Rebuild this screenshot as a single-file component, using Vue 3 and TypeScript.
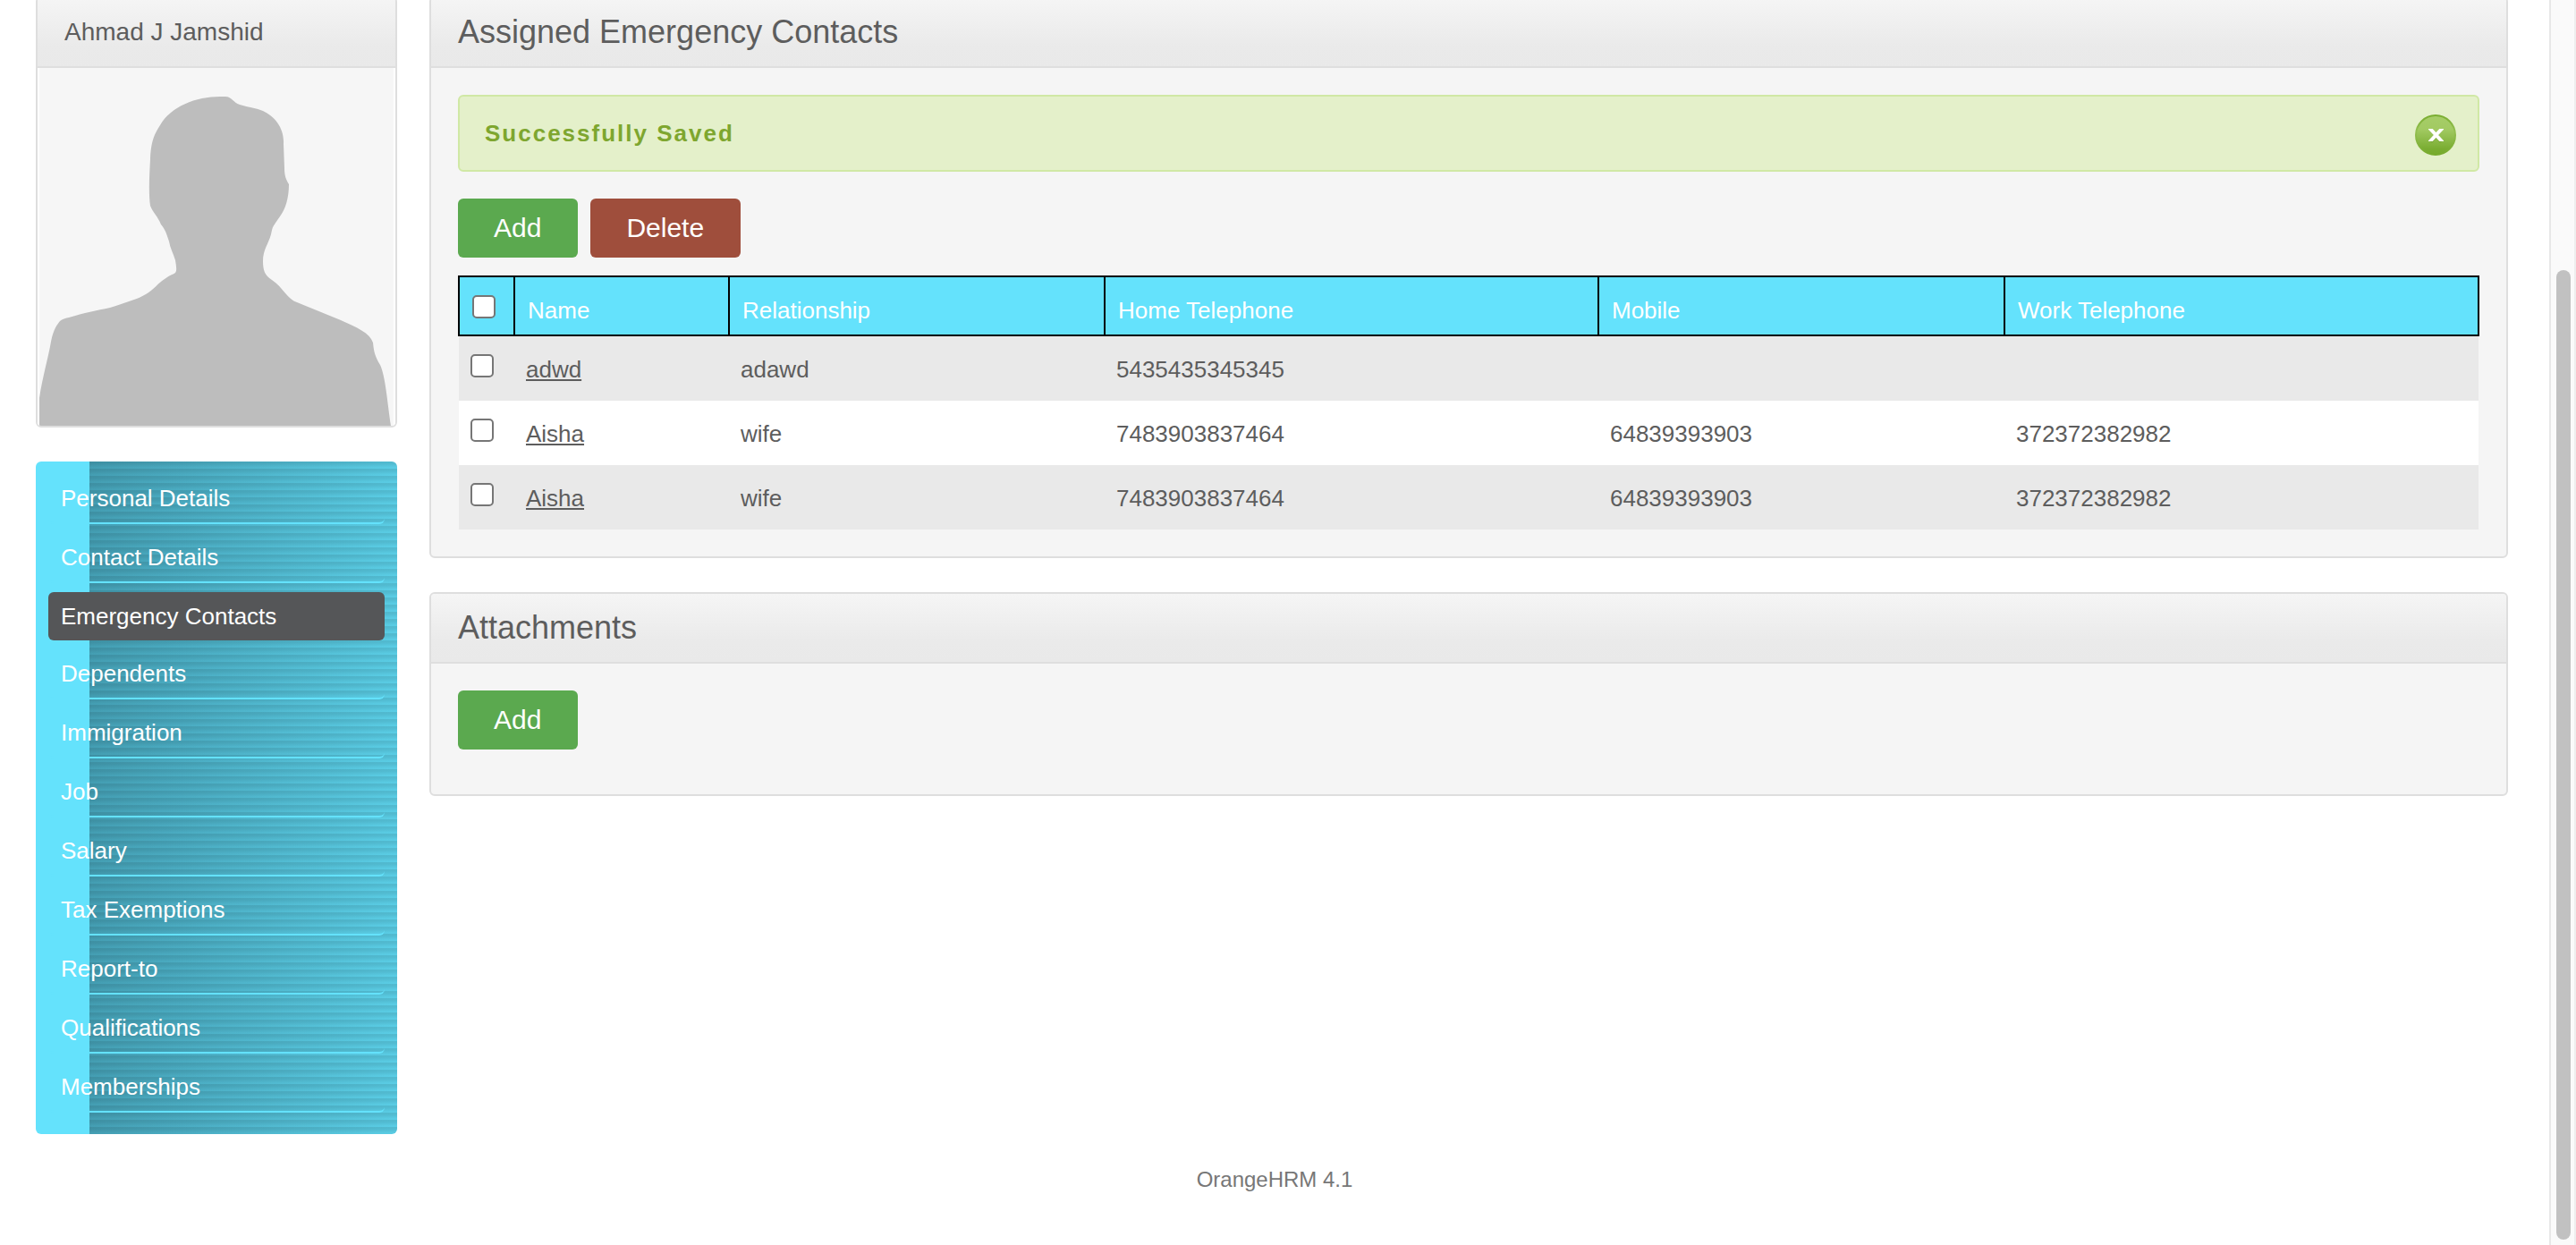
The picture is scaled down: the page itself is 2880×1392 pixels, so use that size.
<script setup lang="ts">
import { ref } from 'vue'

interface MenuItem {
  label: string
  selected?: boolean
}

interface Contact {
  id: number
  name: string
  relationship: string
  home: string
  mobile: string
  work: string
}

const menu: MenuItem[] = [
  { label: 'Personal Details' },
  { label: 'Contact Details' },
  { label: 'Emergency Contacts', selected: true },
  { label: 'Dependents' },
  { label: 'Immigration' },
  { label: 'Job' },
  { label: 'Salary' },
  { label: 'Tax Exemptions' },
  { label: 'Report-to' },
  { label: 'Qualifications' },
  { label: 'Memberships' },
]

const contacts: Contact[] = [
  { id: 1, name: 'adwd', relationship: 'adawd', home: '5435435345345', mobile: '', work: '' },
  { id: 2, name: 'Aisha', relationship: 'wife', home: '7483903837464', mobile: '64839393903', work: '372372382982' },
  { id: 3, name: 'Aisha', relationship: 'wife', home: '7483903837464', mobile: '64839393903', work: '372372382982' },
]

// Relative column widths: tick box, name, relationship, home, mobile, work
const columns = [62, 240, 420, 552, 454, 530]
const total = columns.reduce((sum, width) => sum + width, 0)
const share = (width: number) => `${(width / total) * 100}%`

const picked = ref<number[]>([])
const toggleAll = (event: Event) => {
  picked.value = (event.target as HTMLInputElement).checked ? contacts.map((c) => c.id) : []
}
</script>

<template>
  <div class="screen">
    <div class="page">
      <div class="columns">
        <aside class="sidebar">
          <section class="panel profile">
            <h1 class="panel-head profile-name">Ahmad J Jamshid</h1>
            <svg class="photo" viewBox="0 0 400 400" role="img" aria-label="Employee photo">
              <rect width="400" height="400" fill="#fff" />
              <rect x="2" width="396" height="400" fill="#f6f6f6" />
              <path
                fill="#bdbdbd"
                d="M2 400V369C6 343 12 324 15 306C18 291 22 287 25 283C27 281 30 280 35 279C52 274 66 271 81 268C90 265 97 263 105 260C111 258 116 256 121 253C130 248 135 240 142 236C147 232 151 231 154 229C156 226 155 222 154 215C152 208 148 201 147 194C144 185 143 181 138 175C134 165 129 162 126 154C124 140 125 120 126 102C127 80 131 74 137 64C149 43 177 32 204 32H210C217 32 218 38 226 41C236 44 245 45 252 48C265 54 276 67 275 85L276 112C276 121 278 125 281 130C281 146 277 158 271 166C262 179 263 177 261 186C258 197 252 203 252 216C252 226 254 232 262 237C274 245 280 259 290 262L339 282C357 290 371 296 375 307C376 317 377 322 383 332C389 345 391 373 395 400Z"
              />
            </svg>
          </section>

          <nav aria-label="Employee">
            <ul class="menu">
              <li v-for="item in menu" :key="item.label">
                <a href="#" class="menu-link" :class="{ selected: item.selected }">{{ item.label }}</a>
              </li>
            </ul>
          </nav>
        </aside>

        <main class="content">
          <section class="panel">
            <h1 class="panel-head">Assigned Emergency Contacts</h1>
            <div class="panel-body">
              <div class="message" role="status">
                <span>Successfully Saved</span>
                <button type="button" class="close" aria-label="Close">
                  <svg viewBox="0 0 46 46" aria-hidden="true">
                    <defs>
                      <linearGradient id="closeFill" x1="0" y1="0" x2="0" y2="1">
                        <stop offset="0" stop-color="#a6cd68" />
                        <stop offset="0.35" stop-color="#a2ca62" />
                        <stop offset="0.85" stop-color="#7aad32" />
                        <stop offset="1" stop-color="#76aa2c" />
                      </linearGradient>
                      <linearGradient id="closeRim" x1="0" y1="0" x2="0" y2="1">
                        <stop offset="0" stop-color="#79ad30" />
                        <stop offset="0.4" stop-color="#93bf50" />
                        <stop offset="1" stop-color="#76aa2c" />
                      </linearGradient>
                      <clipPath id="closeMark">
                        <rect x="15" y="16" width="17" height="14" />
                      </clipPath>
                    </defs>
                    <circle cx="23" cy="23" r="22" fill="url(#closeFill)" stroke="url(#closeRim)" stroke-width="2" />
                    <path d="M18 18L29 31M29 18L18 31" stroke="#6d9c2c" stroke-opacity="0.4" stroke-width="3" />
                    <path
                      d="M16 15L31 31M31 15L16 31"
                      stroke="#fff"
                      stroke-width="4"
                      clip-path="url(#closeMark)"
                    />
                  </svg>
                </button>
              </div>

              <div class="actions">
                <button type="button" class="button add">Add</button>
                <button type="button" class="button delete">Delete</button>
              </div>

              <table class="contacts">
                <colgroup>
                  <col v-for="(width, i) in columns" :key="i" :style="{ width: share(width) }" />
                </colgroup>
                <thead>
                  <tr>
                    <th><input type="checkbox" aria-label="Select all" @change="toggleAll" /></th>
                    <th>Name</th>
                    <th>Relationship</th>
                    <th>Home Telephone</th>
                    <th>Mobile</th>
                    <th>Work Telephone</th>
                  </tr>
                </thead>
                <tbody>
                  <tr v-for="contact in contacts" :key="contact.id">
                    <td>
                      <input v-model="picked" type="checkbox" :value="contact.id" :aria-label="`Select ${contact.name}`" />
                    </td>
                    <td><a href="#">{{ contact.name }}</a></td>
                    <td>{{ contact.relationship }}</td>
                    <td>{{ contact.home }}</td>
                    <td>{{ contact.mobile }}</td>
                    <td>{{ contact.work }}</td>
                  </tr>
                </tbody>
              </table>
            </div>
          </section>

          <section class="panel">
            <h1 class="panel-head">Attachments</h1>
            <div class="panel-body attachments">
              <button type="button" class="button add">Add</button>
            </div>
          </section>
        </main>
      </div>

      <footer class="footer">OrangeHRM 4.1</footer>
    </div>

    <div class="scroll-track" aria-hidden="true">
      <div class="scroll-thumb"></div>
    </div>
  </div>
</template>

<style>
body {
  margin: 0;
  overflow: hidden;
}
</style>

<style scoped>
* {
  box-sizing: border-box;
}

.screen {
  display: flex;
  height: 100vh;
  overflow: hidden;
  background: #fff;
  color: #5d5d5d;
  font-family: Arial, "Liberation Sans", sans-serif;
  font-size: 26px;
  line-height: 30px;
}

.page {
  flex: 1;
  min-width: 0;
  /* the page is scrolled a little past the top of the panels */
  margin-top: -4px;
}

.columns {
  display: flex;
  align-items: flex-start;
  gap: 36px;
  padding: 0 46px 0 40px;
}

.sidebar {
  flex: 0 0 404px;
  display: flex;
  flex-direction: column;
  gap: 38px;
}

.content {
  flex: 1;
  min-width: 0;
  display: flex;
  flex-direction: column;
  gap: 38px;
}

.panel {
  border: 2px solid #dedede;
  border-radius: 6px;
  background: #f5f5f5;
  overflow: hidden;
}

.panel-head {
  margin: 0;
  padding: 0 30px;
  border-bottom: 2px solid #dedede;
  background: linear-gradient(#f5f5f5, #eaeaea 70%, #e9e9e9);
  font-size: 36px;
  font-weight: 400;
  line-height: 76px;
}

.profile-name {
  font-size: 28px;
}

.photo {
  display: block;
  width: 100%;
}

.panel-body {
  padding: 30px;
}

.attachments {
  padding-bottom: 50px;
}

.menu {
  display: flex;
  flex-direction: column;
  gap: 10px;
  margin: 0;
  padding: 14px 14px 24px;
  list-style: none;
  border-radius: 6px;
  background:
    linear-gradient(#64e2fc, #64e2fc) 0 0 / 60px 100% no-repeat,
    repeating-linear-gradient(rgba(0, 0, 0, 0.09) 0 2px, rgba(0, 0, 0, 0) 7px 8px),
    linear-gradient(90deg, #449eb3 60px, #5acde5);
}

.menu-link {
  display: block;
  padding: 0 14px;
  border-bottom: 2px solid #64e2fc;
  border-radius: 6px;
  color: #fff;
  line-height: 54px;
  text-decoration: none;
}

.menu-link.selected {
  border-bottom: 0;
  background: #555658;
}

.message {
  display: flex;
  align-items: center;
  justify-content: space-between;
  padding: 16px 24px 16px 28px;
  border: 2px solid #d0e8a5;
  border-radius: 6px;
  background: #e4f0ca;
  color: #7ea62f;
  font-weight: 700;
  letter-spacing: 2px;
}

.close {
  padding: 4px 0 0;
  border: 0;
  background: none;
}

.close svg {
  display: block;
  width: 46px;
  height: 46px;
}

.actions {
  display: flex;
  gap: 14px;
  padding: 30px 0 20px;
}

.button {
  padding: 0 41px 0 40px;
  border: 0;
  border-radius: 6px;
  color: #fff;
  font-family: inherit;
  font-size: 30px;
  line-height: 66px;
}

.add {
  background: #5ba94f;
}

.delete {
  background: #9f4e3c;
}

.contacts {
  width: 100%;
  table-layout: fixed;
  border-collapse: collapse;
}

.contacts th {
  padding: 22px 14px 12px;
  border: 2px solid #000;
  background: #64e2fc;
  color: #fff;
  font-weight: 400;
  text-align: left;
  vertical-align: top;
}

.contacts td {
  padding: 22px 13px 20px;
  vertical-align: top;
}

.contacts tbody tr {
  background: #fff;
}

.contacts tbody tr:nth-child(odd) {
  background: #e9e9e9;
}

.contacts a {
  color: inherit;
  text-underline-offset: 2px;
  text-decoration-thickness: 2px;
  text-decoration-skip-ink: none;
}

.contacts input {
  appearance: none;
  display: block;
  width: 26px;
  height: 26px;
  margin: -2px 0 0;
  border: 2px solid #767676;
  border-radius: 5px;
  background: #fff;
}

.contacts input:checked {
  background: #64e2fc;
}

.footer {
  padding-top: 36px;
  color: #777;
  font-size: 24px;
  text-align: center;
}

.scroll-track {
  flex: 0 0 30px;
  padding: 302px 4px 6px 6px;
  border-right: 2px solid #eee;
  border-left: 2px solid #e8e8e8;
  background: #fafafa;
}

.scroll-thumb {
  width: 16px;
  height: 100%;
  border-radius: 8px;
  background: #c1c1c1;
}
</style>
